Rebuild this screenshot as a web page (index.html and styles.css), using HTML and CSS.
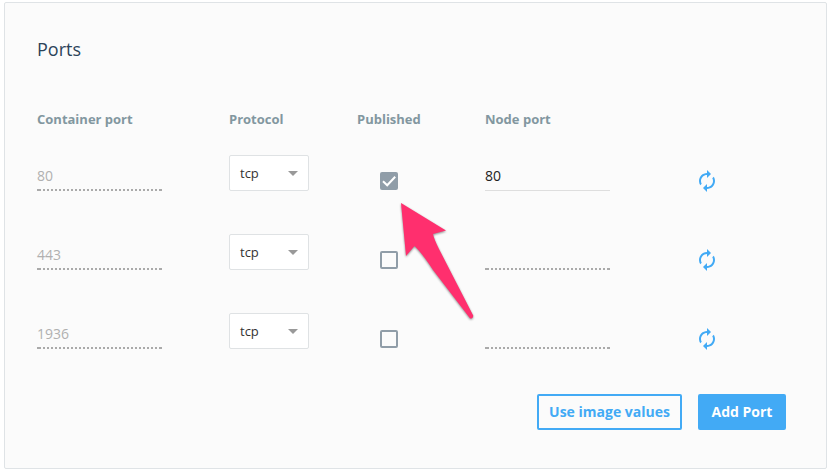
FILE: index.html
```html
<!DOCTYPE html>
<html lang="en">
<head>
<meta charset="utf-8">
<title>Ports</title>
<link rel="stylesheet" href="styles.css">
</head>
<body>
<svg class="defs" aria-hidden="true">
  <symbol id="renew" viewBox="0 0 24 24"><path d="M12 6v3l4-4-4-4v3c-4.42 0-8 3.58-8 8 0 1.57.46 3.03 1.24 4.26L6.7 14.8c-.45-.83-.7-1.79-.7-2.8 0-3.31 2.69-6 6-6zm6.76 1.74L17.3 9.2c.44.84.7 1.79.7 2.8 0 3.31-2.69 6-6 6v-3l-4 4 4 4v-3c4.42 0 8-3.58 8-8 0-1.57-.46-3.03-1.24-4.26z"/></symbol>
</svg>
<section class="card">
  <h1 class="title">Ports</h1>
  <div class="row head">
    <span>Container port</span><span>Protocol</span><span>Published</span><span>Node port</span>
  </div>
  <div class="row port">
    <div class="field dotted">80</div>
    <div class="select">tcp</div>
    <div class="check checked"><svg viewBox="0 0 18 18"><path d="M3 9.3l4.2 4L15.2 4.7"/></svg></div>
    <div class="field solid">80</div>
    <svg class="renew"><use href="#renew"/></svg>
  </div>
  <div class="row port">
    <div class="field dotted">443</div>
    <div class="select">tcp</div>
    <div class="check"></div>
    <div class="field dotted"></div>
    <svg class="renew"><use href="#renew"/></svg>
  </div>
  <div class="row port">
    <div class="field dotted">1936</div>
    <div class="select">tcp</div>
    <div class="check"></div>
    <div class="field dotted"></div>
    <svg class="renew"><use href="#renew"/></svg>
  </div>
  <div class="actions">
    <button class="button outline">Use image values</button>
    <button class="button filled">Add Port</button>
  </div>
  <svg class="pointer" viewBox="0 0 90 130"><path d="M11 13L56 40.5 43 44Q44 49 49 59L83.200 125.500Q83.500 128 81.500 128.500 80 129 79 127L43 80Q32 63 24.500 56L16 66Z"/></svg>
</section>
</body>
</html>
```
FILE: styles.css
```css
* { box-sizing: border-box; }
body { margin: 0; padding: 2px 5px 4px 4px; background: #fff; font-family: "Open Sans", "Noto Sans", sans-serif; }
.defs { position: absolute; width: 0; height: 0; }
.card { position: relative; height: 467px; padding: 32px 40px 0 32px; background: #fbfbfb; border: 1px solid #dfe3e6; border-radius: 2px; }
.title { margin: 0; font-size: 18px; line-height: 28px; font-weight: 400; color: #2c4359; }
.row { display: grid; grid-template-columns: 192px 128px 128px 210px 1fr; }
.head { margin-top: 46px; height: 43px; font-size: 13px; line-height: 20px; font-weight: 700; color: #8297a0; }
.port { height: 79px; }
.field { width: 125px; height: 39px; padding-top: 14px; font-size: 14px; line-height: 20px; color: #b0b0b0; }
.dotted {
  background:
    linear-gradient(#aaa, #aaa) 0 37px / 2px 2px no-repeat,
    repeating-linear-gradient(90deg, transparent 0 2px, #aaa 2px 4px) 0 37px / 124px 2px no-repeat,
    linear-gradient(#aaa, #aaa) 124px 37px / 1px 2px no-repeat;
}
.solid { border-bottom: 1px solid #dedede; color: #222; }
.select { display: flex; align-items: center; justify-content: space-between; width: 80px; height: 36px; margin-top: 3px; padding: 0 10px; border: 1px solid #dfe2e4; border-radius: 2px; background: #fff; color: #333; font-size: 13px; }
.select::after { content: ""; border: 5px solid transparent; border-top-color: #999; border-bottom: 0; }
.check { width: 18px; height: 18px; margin: 20px 0 0 23px; border: 2px solid #909da8; border-radius: 2px; }
.checked { border: 0; background: #909da8; }
.check svg { display: block; width: 18px; height: 18px; fill: none; stroke: #fff; stroke-width: 2; }
.renew { width: 24px; height: 24px; margin-top: 17px; fill: #42aaf5; }
.actions { display: flex; justify-content: flex-end; gap: 16px; margin-top: 5px; }
.button { height: 36px; padding: 0; border: 2px solid #42aaf5; border-radius: 2px; font: 700 14px/20px "Open Sans", sans-serif; }
.outline { width: 145px; background: #fbfbfb; color: #42aaf5; }
.filled { width: 88px; background: #42aaf5; color: #fff; }
.pointer { position: absolute; left: 385px; top: 187px; width: 90px; height: 130px; overflow: visible; fill: #ff2f6e; filter: drop-shadow(0 1px 1px rgba(0, 0, 0, .45)); }
```
